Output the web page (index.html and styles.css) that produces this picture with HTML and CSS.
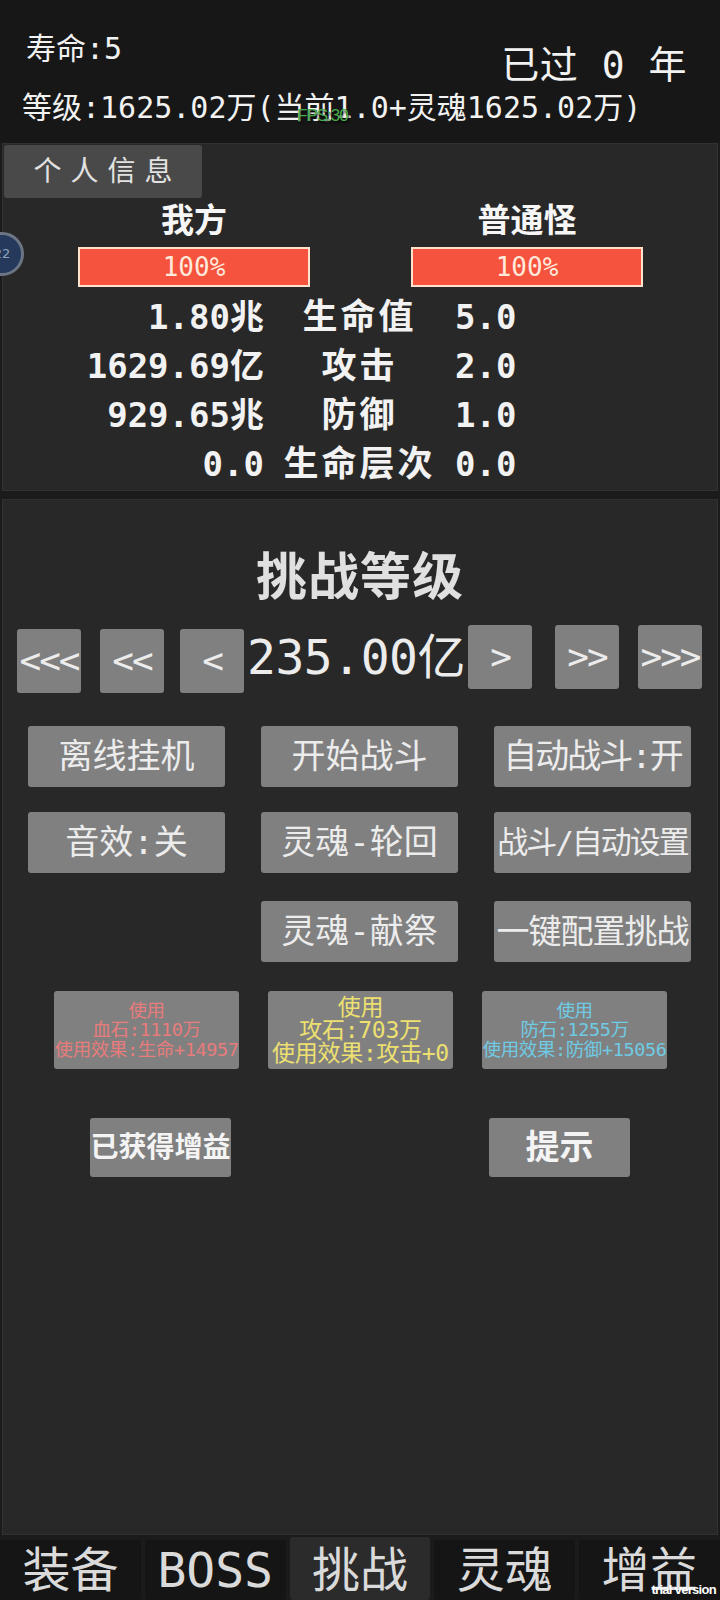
FILE: index.html
```html
<!DOCTYPE html>
<html lang="zh">
<head>
<meta charset="utf-8">
<title>挑战</title>
<link rel="stylesheet" href="styles.css">
</head>
<body>
<div class="screen">
  <header class="top">
    <div class="top-row">
      <span class="life">寿命:5</span>
      <span class="years">已过 0 年</span>
    </div>
    <div class="level">等级:1625.02万(当前1.0+灵魂1625.02万)</div>
    <span class="fps">FPS:30</span>
  </header>

  <section class="panel info">
    <button class="info-btn">个人信息</button>
    <div class="sides">
      <div class="side">
        <div class="side-name">我方</div>
        <div class="hp">100%</div>
      </div>
      <div class="side">
        <div class="side-name">普通怪</div>
        <div class="hp">100%</div>
      </div>
    </div>
    <div class="stats">
      <span class="s-mine">1.80兆</span><span class="s-label">生命值</span><span class="s-foe">5.0</span>
      <span class="s-mine">1629.69亿</span><span class="s-label">攻击</span><span class="s-foe">2.0</span>
      <span class="s-mine">929.65兆</span><span class="s-label">防御</span><span class="s-foe">1.0</span>
      <span class="s-mine">0.0</span><span class="s-label">生命层次</span><span class="s-foe">0.0</span>
    </div>
  </section>

  <section class="panel battle">
    <h1 class="title">挑战等级</h1>
    <div class="nav">
      <button class="nav-btn low n1">&lt;&lt;&lt;</button>
      <button class="nav-btn low n2">&lt;&lt;</button>
      <button class="nav-btn low n3">&lt;</button>
      <span class="nav-value">235.00亿</span>
      <button class="nav-btn n4">&gt;</button>
      <button class="nav-btn n5">&gt;&gt;</button>
      <button class="nav-btn n6">&gt;&gt;&gt;</button>
    </div>
    <div class="actions">
      <button class="act">离线挂机</button>
      <button class="act">开始战斗</button>
      <button class="act fit-a">自动战斗:开</button>
      <button class="act">音效:关</button>
      <button class="act">灵魂-轮回</button>
      <button class="act fit-b">战斗/自动设置</button>
      <span class="act-empty"></span>
      <button class="act r3">灵魂-献祭</button>
      <button class="act r3 fit-c">一键配置挑战</button>
    </div>
    <div class="stones">
      <button class="stone blood">使用<br>血石:1110万<br>使用效果:生命+14957</button>
      <button class="stone atk">使用<br>攻石:703万<br>使用效果:攻击+0</button>
      <button class="stone def">使用<br>防石:1255万<br>使用效果:防御+15056</button>
    </div>
    <div class="extras">
      <button class="extra small">已获得增益</button>
      <button class="extra">提示</button>
    </div>
  </section>

  <nav class="tabs">
    <span class="tab">装备</span>
    <span class="tab">BOSS</span>
    <span class="tab active">挑战</span>
    <span class="tab">灵魂</span>
    <span class="tab">增益</span>
  </nav>

  <div class="badge">22</div>
  <span class="trial">trial version</span>
</div>
</body>
</html>
```

FILE: styles.css
```css
html, body {
  margin: 0;
  padding: 0;
  background: #1b1b1b;
}

.screen {
  position: relative;
  width: 720px;
  height: 1600px;
  overflow: hidden;
  background: #1b1b1b;
  color: #f2f2f2;
  font-family: "DejaVu Sans Mono", "Noto Sans CJK SC", monospace;
}

button {
  font-family: "DejaVu Sans Mono", "Noto Sans CJK SC", monospace;
  border: none;
  padding: 0;
  margin: 0;
  cursor: pointer;
}

/* ---------- top bar ---------- */
.top {
  position: relative;
  height: 143px;
  box-sizing: border-box;
  padding: 34px 33px 0 26px;
  background: #171717;
}

.top-row {
  display: flex;
  justify-content: space-between;
  align-items: flex-start;
  height: 59px;
}

.life {
  font-size: 30px;
  line-height: 30px;
}

.years {
  font-size: 38px;
  line-height: 38px;
  margin-top: 12px;
  letter-spacing: 0.5px;
}

.level {
  margin-left: -4px;
  font-size: 30px;
  line-height: 30px;
  white-space: nowrap;
}

.fps {
  position: absolute;
  left: 297px;
  top: 106px;
  font-family: "Liberation Sans", sans-serif;
  font-size: 17px;
  letter-spacing: -1px;
  color: #46ad4c;
  text-shadow: 1px 2px 2px rgba(0, 0, 0, 0.8);
}

/* ---------- panels ---------- */
.panel {
  position: relative;
  width: 716px;
  margin-left: 2px;
  box-sizing: border-box;
  border: 1px solid #313131;
  background: #282828;
}

.info {
  height: 348px;
}

.info-btn {
  display: block;
  width: 198px;
  height: 53px;
  margin: 1px 0 0 1px;
  border-radius: 3px;
  background: #494949;
  color: #e2e2e2;
  font-size: 28px;
  letter-spacing: 9px;
  padding-left: 9px;
  line-height: 53px;
}

.sides {
  display: grid;
  grid-template-columns: 232px 232px;
  column-gap: 101px;
  margin-top: 6px;
  padding-left: 75px;
}

.side {
  display: flex;
  flex-direction: column;
  align-items: center;
}

.side-name {
  font-size: 33px;
  line-height: 34px;
  font-weight: bold;
  color: #f6f6f6;
}

.hp {
  width: 232px;
  height: 40px;
  margin-top: 9px;
  box-sizing: border-box;
  border: 2px solid #ffe2cb;
  background: #f5533e;
  color: #ffe9dc;
  font-size: 26px;
  line-height: 36px;
  text-align: center;
}

.stats {
  display: grid;
  grid-template-columns: 261px 188px 1fr;
  grid-auto-rows: 49px;
  margin-top: 6px;
  align-items: center;
  font-weight: bold;
}

.s-mine {
  text-align: right;
  font-size: 34px;
  line-height: 49px;
  white-space: nowrap;
}

.s-label {
  text-align: center;
  font-size: 35px;
  line-height: 49px;
  letter-spacing: 3px;
  padding-left: 3px;
  white-space: nowrap;
}

.s-foe {
  padding-left: 3px;
  font-size: 34px;
  line-height: 49px;
}

/* ---------- battle panel ---------- */
.panel.battle {
  height: 1036px;
  margin-top: 8px;
}

.title {
  margin: 53px 0 0;
  text-align: center;
  font-size: 51px;
  line-height: 50px;
  font-weight: bold;
  color: #e0e0e0;
  letter-spacing: 1px;
}

.nav {
  display: flex;
  align-items: flex-start;
  height: 68px;
  margin-top: 22px;
  padding-left: 14px;
}

.nav-btn {
  width: 64px;
  height: 64px;
  border-radius: 3px;
  background: #808080;
  color: #ececec;
  font-size: 36px;
  line-height: 64px;
  letter-spacing: -2px;
}

.nav-btn.low { margin-top: 4px; }
.n2 { margin-left: 19px; }
.n3 { margin-left: 16px; }
.n5 { margin-left: 23px; }
.n6 { margin-left: 19px; }

.nav-value {
  width: 224px;
  text-align: center;
  font-size: 48px;
  line-height: 64px;
  color: #ececec;
  white-space: nowrap;
  letter-spacing: -0.5px;
}

.actions {
  display: grid;
  grid-template-columns: repeat(3, 197px);
  grid-template-rows: 61px 61px 61px;
  column-gap: 36px;
  row-gap: 25px;
  margin-top: 33px;
  padding-left: 25px;
}

.act {
  border-radius: 3px;
  background: #808080;
  color: #ececec;
  font-size: 34px;
  line-height: 61px;
  white-space: nowrap;
  overflow: hidden;
  text-align: center;
  display: flex;
  justify-content: center;
}

.act.r3 { margin-top: 3px; margin-bottom: -3px; }
.fit-a { font-size: 34px; letter-spacing: -2px; }
.fit-b { font-size: 31px; letter-spacing: -2px; }
.fit-c { font-size: 33px; letter-spacing: -1px; }

.stones {
  display: grid;
  grid-template-columns: repeat(3, 185px);
  column-gap: 29px;
  margin-top: 32px;
  padding-left: 51px;
}

.stone {
  height: 78px;
  border-radius: 3px;
  background: #808080;
  font-size: 18.5px;
  line-height: 19.5px;
  white-space: nowrap;
  overflow: hidden;
  text-align: center;
  letter-spacing: -0.4px;
}

.stone.blood { color: #e87c7c; }
.stone.atk { color: #ede070; font-size: 23px; line-height: 23px; letter-spacing: -0.3px; }
.stone.def { color: #6fcbe4; }

.extras {
  display: flex;
  gap: 258px;
  margin-top: 49px;
  padding-left: 87px;
}

.extra {
  width: 141px;
  height: 59px;
  border-radius: 3px;
  background: #808080;
  color: #f4f4f4;
  font-size: 34px;
  font-weight: bold;
  line-height: 59px;
  white-space: nowrap;
  overflow: hidden;
}

.extra.small {
  font-size: 28px;
  letter-spacing: 0;
}

/* ---------- tabs ---------- */
.tabs {
  display: grid;
  grid-template-columns: repeat(5, 1fr);
  column-gap: 4px;
  align-items: end;
  height: 63px;
  margin-top: 2px;
  background: #1b1b1b;
}

.tab {
  height: 60px;
  border-radius: 3px;
  background: #151515;
  color: #dadada;
  font-size: 48px;
  line-height: 60px;
  text-align: center;
  white-space: nowrap;
  overflow: hidden;
}

.tab.active {
  height: 63px;
  background: #2b2b2b;
  line-height: 66px;
}

/* ---------- overlays ---------- */
.badge {
  position: absolute;
  left: -20px;
  top: 232px;
  width: 44px;
  height: 44px;
  box-sizing: border-box;
  border: 3px solid #6b7584;
  border-radius: 50%;
  background: #24395c;
  color: #8fa2bd;
  font-family: "DejaVu Sans", sans-serif;
  font-size: 13px;
  line-height: 38px;
  text-align: center;
}

.trial {
  position: absolute;
  right: 4px;
  bottom: 3px;
  font-family: "Liberation Sans", sans-serif;
  font-weight: bold;
  font-size: 13px;
  letter-spacing: -0.7px;
  color: #ffffff;
}
```
